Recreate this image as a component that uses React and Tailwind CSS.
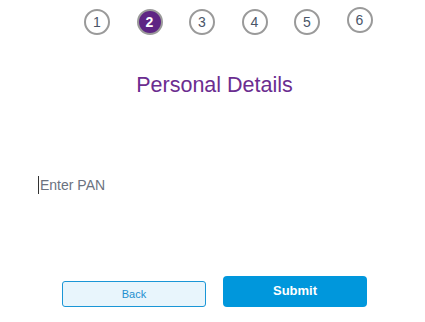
import React from 'react';

const steps = [1, 2, 3, 4, 5, 6];

const App = () => {
  return (
    <div className="w-[425px] h-[322px] bg-white font-['Liberation_Sans',Arial,sans-serif] flex flex-col">
      {/* stepper */}
      <div className="flex pl-[84px] pt-[9px] gap-[26.5px]">
        {steps.map((n) => (
          <div
            key={n}
            className={
              n === 2
                ? 'w-[26px] h-[26px] rounded-full border-2 border-[#9a9a9a] bg-[#5e2584] text-white font-bold text-[14px] flex items-center justify-center'
                : n === 6
                ? 'w-[26px] h-[26px] -mt-[2px] rounded-full border-2 border-[#9a9a9a] bg-white text-[#4a5568] text-[14px] flex items-center justify-center'
                : 'w-[26px] h-[26px] rounded-full border-2 border-[#9a9a9a] bg-white text-[#4a5568] text-[14px] flex items-center justify-center'
            }
          >
            {n}
          </div>
        ))}
      </div>

      {/* title */}
      <h1 className="mt-[37px] text-center pl-[4px] text-[21.5px] leading-[26px] text-[#6b2d90]">Personal Details</h1>

      {/* PAN input */}
      <div className="mt-[75px] pl-[38px]">
        <input
          type="text"
          placeholder="Enter PAN"
          className="w-[340px] text-[14px] leading-[18px] outline-none border-l border-[#333] pl-[1px] placeholder:text-[#6b7280] bg-transparent"
        />
      </div>

      {/* buttons */}
      <div className="mt-[79px] flex items-end pl-[62px] gap-[17px]">
        <button
          type="button"
          className="w-[144px] h-[26px] rounded-[3px] border border-[#1a96d6] bg-[#e8f5fc] text-[#1f8fcf] text-[11px]"
        >
          Back
        </button>
        <button
          type="button"
          className="w-[144px] h-[31px] rounded-[4px] bg-[#0097dc] text-white font-bold text-[13px] pb-[1px]"
        >
          Submit
        </button>
      </div>
    </div>
  );
};

export default App;
